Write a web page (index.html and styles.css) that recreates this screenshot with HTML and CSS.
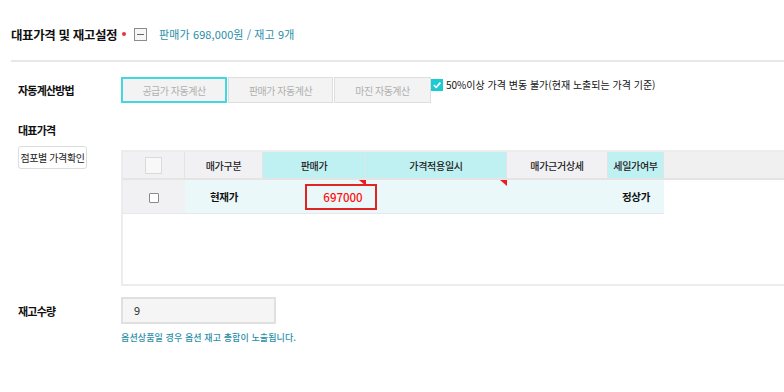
FILE: index.html
```html
<!DOCTYPE html>
<html lang="ko">
<head>
  <meta charset="UTF-8" />
  <meta name="viewport" content="width=device-width, initial-scale=1" />
  <title>대표가격 및 재고설정</title>
  <link rel="stylesheet" href="styles.css">
</head>
<body>
  <div class="panel">
    <div class="panel-head">
      <h2 class="panel-title">대표가격 및 재고설정</h2>
      <span class="req-dot"></span>
      <button class="fold-btn" type="button"><span></span></button>
      <span class="summary">판매가 698,000원 / 재고 9개</span>
    </div>
    <div class="panel-line"></div>

    <div class="panel-body">
      <div class="field field-calc">
        <div class="field-label">자동계산방법</div>
        <div class="field-ctrl calc-row">
          <div class="seg">
            <button class="seg-btn on" type="button">공급가 자동계산</button>
            <button class="seg-btn mid" type="button">판매가 자동계산</button>
            <button class="seg-btn last" type="button">마진 자동계산</button>
          </div>
          <label class="chk">
            <span class="chk-box">
              <svg width="12" height="12" viewBox="0 0 12 12"><polyline points="2.8,6.2 5.2,8.4 9.4,3.6" fill="none" stroke="#fff" stroke-width="1.7" /></svg>
            </span>
            50%이상 가격 변동 불가(현재 노출되는 가격 기준)
          </label>
        </div>
      </div>

      <div class="field-title">대표가격</div>
      <div class="field field-price">
        <div class="field-label">
          <button class="small-btn" type="button">점포별 가격확인</button>
        </div>
        <div class="field-ctrl">
          <table class="price-table">
            <colgroup>
              <col class="c-chk"><col class="c-type"><col class="c-price"><col class="c-date"><col class="c-reason"><col class="c-sale"><col class="c-rest">
            </colgroup>
            <thead>
              <tr>
                <th class="th-gray"><span class="box-lg"></span></th>
                <th class="th-gray">매가구분</th>
                <th class="th-cyan">판매가</th>
                <th class="th-cyan">가격적용일시</th>
                <th class="th-gray">매가근거상세</th>
                <th class="th-cyan">세일가여부</th>
                <th class="th-rest"></th>
              </tr>
            </thead>
            <tbody>
              <tr class="row-main">
                <td class="td-chk"><span class="box-sm"></span></td>
                <td class="td-strong">현재가</td>
                <td class="td-price mark"><span class="price-input">697000</span></td>
                <td class="mark"></td>
                <td></td>
                <td class="td-strong">정상가</td>
                <td class="td-rest"></td>
              </tr>
              <tr class="row-empty">
                <td colspan="7"></td>
              </tr>
            </tbody>
          </table>
        </div>
      </div>

      <div class="field field-stock">
        <div class="field-label">재고수량</div>
        <div class="field-ctrl">
          <div class="stock-input">9</div>
        </div>
      </div>
      <div class="field">
        <div></div>
        <p class="help">옵션상품일 경우 옵션 재고 총합이 노출됩니다.</p>
      </div>
    </div>
  </div>
</body>
</html>
```

FILE: styles.css
```css
body {
  margin: 0;
  background: #fff;
  color: #222;
  font-family: "Noto Sans CJK KR", "Noto Sans", sans-serif;
  overflow: hidden;
}

button {
  font-family: inherit;
  cursor: pointer;
}

.panel-head {
  display: flex;
  align-items: center;
  height: 20px;
  padding: 24px 0 0 11px;
}

.panel-title {
  margin: 0;
  font-size: 12.5px;
  font-weight: 700;
  letter-spacing: -0.4px;
  color: #111;
}

.req-dot {
  width: 4px;
  height: 4px;
  margin-left: 5px;
  border-radius: 50%;
  background: #e8343a;
}

.fold-btn {
  display: flex;
  align-items: center;
  justify-content: center;
  width: 13px;
  height: 13px;
  margin-left: 8px;
  padding: 0;
  border: 1px solid #8c8c8c;
  background: #f7f7f7;
}

.fold-btn span {
  width: 7px;
  height: 1px;
  background: #666;
}

.summary {
  margin-left: 12px;
  font-size: 11px;
  letter-spacing: 0.1px;
  color: #2a8ea8;
}

.panel-line {
  margin: 16px 0 0 11px;
  border-top: 2px solid #e7e7e7;
}

.panel-body {
  padding-left: 18px;
}

.field {
  display: grid;
  grid-template-columns: 103px minmax(0, 1fr);
  align-items: center;
}

.field-label,
.field-title {
  font-size: 11px;
  font-weight: 700;
  letter-spacing: -0.8px;
  color: #111;
}

.field-calc {
  margin-top: 15px;
}

.calc-row {
  display: flex;
  align-items: flex-start;
}

.seg {
  display: flex;
  gap: 1px;
}

.seg-btn {
  width: 106px;
  height: 26px;
  padding: 0;
  border: 1px solid #dedede;
  background: #f3f3f3;
  color: #b0b0b0;
  font-size: 10px;
  letter-spacing: -0.5px;
}

.seg-btn.on {
  border: 2px solid #45d7df;
}

.seg-btn.mid {
  width: 105px;
}

.seg-btn.last {
  width: 97px;
}

.chk {
  display: flex;
  align-items: center;
  margin: 1px 0 0 0;
  line-height: 14px;
  font-size: 10px;
  color: #111;
}

.chk-box {
  display: flex;
  width: 12px;
  height: 12px;
  margin-right: 3px;
  background: #1ccad6;
}

.field-title {
  margin-top: 19px;
  line-height: 16px;
}

.field-price {
  align-items: start;
  margin-top: 8px;
}

.small-btn {
  width: 69px;
  height: 23px;
  padding: 0;
  border: 1px solid #dcdcdc;
  border-radius: 3px;
  background: #fff;
  color: #222;
  font-size: 10px;
  letter-spacing: -0.4px;
}

.price-table {
  width: 745px;
  margin-top: 4px;
  border: 2px solid #ececec;
  border-spacing: 0;
  table-layout: fixed;
  font-size: 10px;
  letter-spacing: -0.3px;
}

.c-chk { width: 62px; }
.c-type { width: 78px; }
.c-price { width: 103px; }
.c-date { width: 141px; }
.c-reason { width: 101px; }
.c-sale { width: 56px; }
.c-rest { width: 200px; }

.price-table th {
  height: 26px;
  padding: 0;
  border-right: 1px solid #e2e4e6;
  border-bottom: 2px solid #e4e4e4;
  font-weight: 500;
  color: #222;
  text-align: center;
}

.th-gray { background: #f1f1f4; }
.th-cyan { background: #bff1f2; }

.price-table th.th-rest {
  border-right: 0;
  background: #f0f0f0;
}

.box-lg {
  display: inline-block;
  width: 15px;
  height: 15px;
  border: 1px solid #dadada;
  background: #f8f8f8;
  vertical-align: middle;
}

.price-table td {
  padding: 0;
  text-align: center;
}

.row-main td {
  height: 33px;
  border-bottom: 1px solid #e8e8e8;
  background: #eaf8f9;
}

.row-main .td-chk {
  background: #f1f1f4;
}

.row-main .td-rest {
  border-bottom: 0;
  background: #fff;
}

.box-sm {
  display: inline-block;
  width: 8px;
  height: 8px;
  border: 1px solid #8a8a8a;
  border-radius: 1px;
  background: #fff;
  vertical-align: middle;
}

.td-strong {
  font-size: 10.5px;
  font-weight: 700;
  color: #111;
}

.mark {
  position: relative;
}

.mark::after {
  content: "";
  position: absolute;
  top: 0;
  right: 0;
  z-index: 4;
  border-top: 6px solid #f01c1c;
  border-left: 7px solid transparent;
}

.price-table .td-price {
  text-align: left;
}

.price-input {
  position: relative;
  z-index: 3;
  display: block;
  box-sizing: border-box;
  width: 72px;
  height: 26px;
  margin-left: 42px;
  padding-left: 4px;
  border: 2px solid #e02424;
  line-height: 22px;
  text-align: center;
  font-size: 11.5px;
  font-weight: 500;
  letter-spacing: 0;
  color: #ff1010;
}

.row-empty td {
  height: 70px;
  background: #fff;
}

.field-stock {
  margin-top: 11px;
}

.stock-input {
  box-sizing: border-box;
  width: 155px;
  height: 27px;
  padding-left: 11px;
  border: 2px solid #e0e0e0;
  background: #f5f5f5;
  line-height: 23px;
  font-size: 11px;
  color: #333;
}

.help {
  margin: 7px 0 0 0;
  line-height: 14px;
  font-size: 9px;
  font-weight: 500;
  letter-spacing: 0.1px;
  color: #2b90a8;
}
```
